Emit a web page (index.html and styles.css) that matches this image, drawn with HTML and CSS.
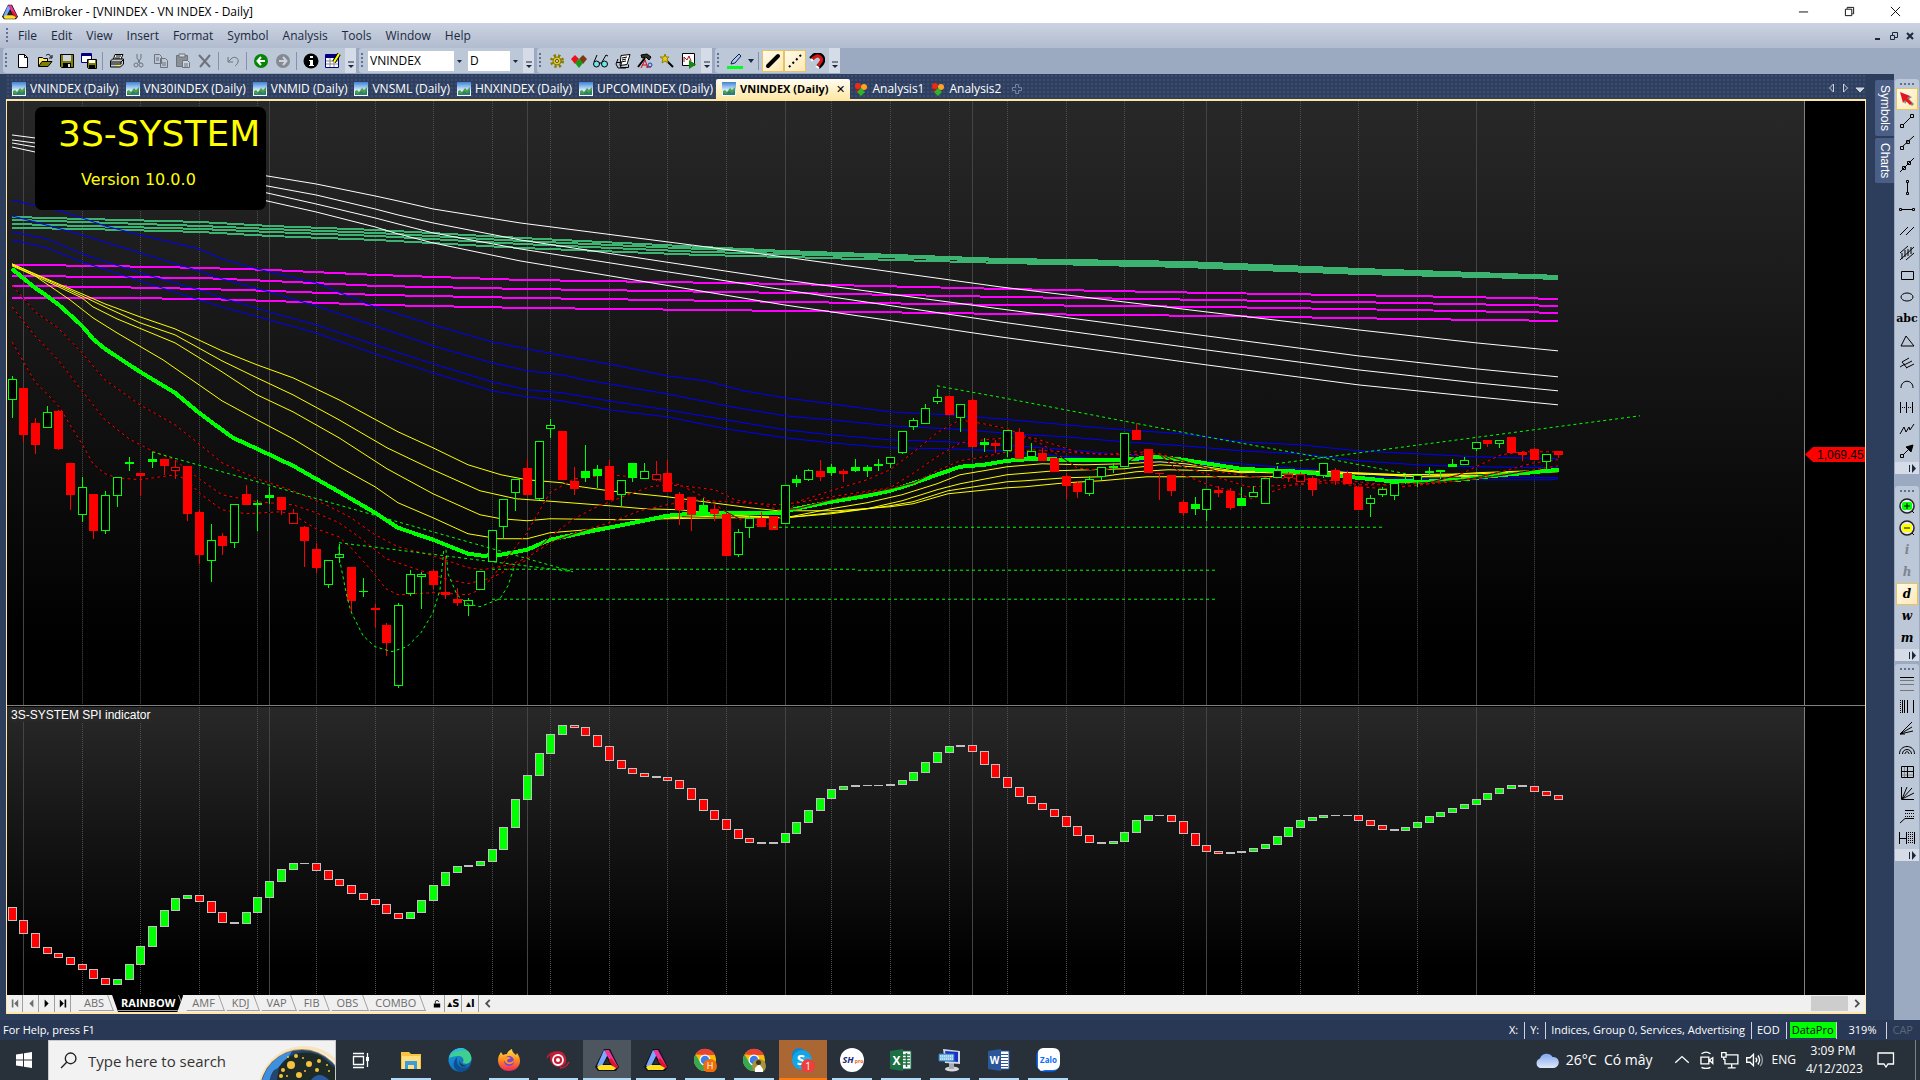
FILE: index.html
```html
<!DOCTYPE html>
<html lang="en">
<head>
<meta charset="utf-8">
<title>AmiBroker - [VNINDEX - VN INDEX - Daily]</title>
<link rel="stylesheet" href="styles.css">
</head>
<body>
<svg class="defs" aria-hidden="true">
  <defs>
    <linearGradient id="sky" x1="0" y1="0" x2="0" y2="1"><stop offset="0" stop-color="#3f83d8"/><stop offset=".6" stop-color="#d8eefc"/><stop offset="1" stop-color="#fff"/></linearGradient>
    <linearGradient id="ff" x1="0" y1="0" x2="0" y2="1"><stop offset="0" stop-color="#ffe14a"/><stop offset=".5" stop-color="#ff8a1e"/><stop offset="1" stop-color="#f0265e"/></linearGradient>
    <linearGradient id="edgeg" x1="0" y1="0" x2="1" y2="1"><stop offset="0" stop-color="#1b9de2"/><stop offset="1" stop-color="#0c59a4"/></linearGradient>
    <linearGradient id="cloudg" x1="0" y1="0" x2="0" y2="1"><stop offset="0" stop-color="#7fa8ee"/><stop offset="1" stop-color="#dfe9fb"/></linearGradient>
    <symbol id="ami" viewBox="0 0 24 24"><path d="M9 1h6l9 18-3 4H3l-3-4z" fill="#111"/><path d="M9 2l4 4-7 14-4-2z" fill="#7aa8ff"/><path d="M10 2h4l9 17-3 2-9-15z" fill="#f0359a"/><path d="M16 10l7 9-3 2-6-8z" fill="#e3122b"/><path d="M2 19l4-2h10l5 3-2 2H4z" fill="#ffe21f"/><path d="M12 10l3 6H9z" fill="#26303a"/></symbol>
    <symbol id="doc" viewBox="0 0 14 14"><rect width="14" height="14" fill="url(#sky)"/><path d="M1 13V9l2-1 2 2 3-4 2 2 3-3v8z" fill="#4fa047"/><path d="M1 13v-2l3 1 3-3 3 2 3-3v5z" fill="#2d7f73"/></symbol>
    <symbol id="gems" viewBox="0 0 14 14"><path d="M1 5l6 5-4 1z" fill="#b81414"/><circle cx="4" cy="4" r="3" fill="#f02818"/><circle cx="10" cy="5" r="3" fill="#ffa320"/><path d="M7 6l4 4-4 4-4-4z" fill="#2cb526"/></symbol>
    <symbol id="more" viewBox="0 0 8 8"><path d="M1 1h6" stroke="#1b293e"/><path d="M1 4h6L4 7z" fill="#1b293e"/></symbol>
    <symbol id="moreside" viewBox="0 0 10 9"><path d="M1.500 1v7" stroke="#1b293e" stroke-width="1"/><path d="M4 0v9l4-4.500z" fill="#1b293e"/></symbol>
    <symbol id="chrome" viewBox="0 0 24 24"><circle cx="12" cy="12" r="11" fill="#fbbc05"/><path d="M2.500 6.500A11 11 0 0 1 22 7H12z" fill="#ea4335"/><path d="M2.500 6.500A11 11 0 0 0 11 23l4-8-8-1z" fill="#34a853"/><circle cx="12" cy="12" r="5.500" fill="#fff"/><circle cx="12" cy="12" r="4.300" fill="#3b7ded"/></symbol>
  </defs>
</svg>

<header class="titlebar">
  <svg class="logo"><use href="#ami"/></svg>
  <h1>AmiBroker - [VNINDEX - VN INDEX - Daily]</h1>
  <div class="winctl">
    <button aria-label="Minimize"><svg viewBox="0 0 12 12"><path d="M1 6.500h10"/></svg></button>
    <button aria-label="Restore"><svg viewBox="0 0 12 12"><path d="M1.500 3.500h7v7h-7zM3.500 3V1.500h7v7H9"/></svg></button>
    <button aria-label="Close"><svg viewBox="0 0 12 12"><path d="M1 1l10 10M11 1L1 11"/></svg></button>
  </div>
</header>

<nav class="menubar">
  <i class="grip"></i>
  <a href="#">File</a><a href="#">Edit</a><a href="#">View</a><a href="#">Insert</a><a href="#">Format</a><a href="#">Symbol</a><a href="#">Analysis</a><a href="#">Tools</a><a href="#">Window</a><a href="#">Help</a>
  <div class="mdictl">
    <button aria-label="Minimize chart"><svg viewBox="0 0 8 8"><path d="M1 7h5" stroke-width="2"/></svg></button>
    <button aria-label="Restore chart"><svg viewBox="0 0 8 8"><path d="M.5 3.500h4v4h-4zM2.500 3V.5h5v5H5"/></svg></button>
    <button aria-label="Close chart"><svg viewBox="0 0 8 8"><path d="M1 1l6 6M7 1L1 7" stroke-width="2"/></svg></button>
  </div>
</nav>

<div class="toolbars">
  <div class="bar">
    <i class="grip"></i>
    <button aria-label="New"><svg viewBox="0 0 16 16"><path d="M3.500 1.500h6l3 3v10h-9z" fill="#fff" stroke="#000"/><path d="M9.500 1.500v3h3" fill="none" stroke="#000"/></svg></button>
    <button aria-label="Open"><svg viewBox="0 0 16 16"><path d="M1.500 13V4.500h4l1 1h4V8" fill="#ffe96a" stroke="#000"/><path d="M1.500 13.500L5 8.500h10l-4 5z" fill="#808000" stroke="#000"/><path d="M9 2.500c2-2 4-1 5 1.500M15 2v3h-3" fill="none" stroke="#000"/></svg></button>
    <button aria-label="Save"><svg viewBox="0 0 16 16"><path d="M1.500 1.500h13v13h-12l-1-1z" fill="#808000" stroke="#000"/><path d="M4 2h8v6H4z" fill="#ccd4e0"/><path d="M4 10h8v4H4z" fill="#000"/><path d="M9 11h2v3H9z" fill="#ddd"/></svg></button>
    <button aria-label="Save all"><svg viewBox="0 0 16 16"><path d="M.5.5h10v9H.5z" fill="#fff" stroke="#000080"/><path d="M1 1h9v2H1z" fill="#000080"/><path d="M6.500 6.500h9v9h-8l-1-1z" fill="#808000" stroke="#000"/><path d="M8 7h6v3H8z" fill="#fff"/><path d="M8 12h6v3H8z" fill="#000"/></svg></button>
    <i class="sep"></i>
    <button aria-label="Print"><svg viewBox="0 0 16 16"><path d="M4.500 6L6 1.500h8L12 6" fill="#fff" stroke="#000"/><path d="M7 3h5M6 5h5" stroke="#000"/><path d="M1.500 8l2-2h11v5l-3 3h-10z" fill="#c8c8c8" stroke="#000"/><path d="M2 9h10v2H2M12 9l3-3" stroke="#000" fill="none"/><path d="M8 12h3v1H8z" fill="#ff0"/></svg></button>
    <button aria-label="Cut"><svg viewBox="0 0 16 16" class="ln dim"><path d="M6 1v4l3 5M10 1v4L7 10"/><circle cx="5" cy="12" r="2"/><circle cx="10" cy="12" r="2"/></svg></button>
    <button aria-label="Copy"><svg viewBox="0 0 16 16" class="ln dim"><path d="M1.500 1.500h5l2 2v7h-7zM7.500 5.500h5l2 2v7h-7zM3 5h3M3 7h3M9 10h4M9 12h4"/></svg></button>
    <button aria-label="Paste"><svg viewBox="0 0 16 16"><path d="M1.500 2.500h11v11h-11z" fill="#8b8f96" stroke="#6d737c"/><path d="M4 1h6v3H4z" fill="#d5d9df" stroke="#6d737c"/><path d="M7.500 7.500h5l2 2v5h-7z" fill="#ccd4e0" stroke="#6d737c"/><path d="M9 11h4M9 13h4" stroke="#6d737c"/></svg></button>
    <button aria-label="Delete"><svg viewBox="0 0 16 16" class="ln dim"><path d="M2 2l11 12M13 2L3 14" stroke-width="2"/></svg></button>
    <i class="sep"></i>
    <button aria-label="Undo"><svg viewBox="0 0 16 16" class="ln dim"><path d="M3 4v5h5M3 9l4-4c4-2 7 1 6 4s-2 3-3 4"/></svg></button>
    <i class="sep"></i>
    <button aria-label="Back"><svg viewBox="0 0 16 16"><circle cx="8" cy="8" r="7" fill="#078507"/><path d="M12 8H5M8 4L4.500 8 8 12" fill="none" stroke="#fff" stroke-width="2"/></svg></button>
    <button aria-label="Forward"><svg viewBox="0 0 16 16"><circle cx="8" cy="8" r="7" fill="#858a91"/><path d="M4 8h7M8 4l3.500 4L8 12" fill="none" stroke="#ccd4e0" stroke-width="2"/></svg></button>
    <i class="sep"></i>
    <button aria-label="Information"><svg viewBox="0 0 16 16"><circle cx="8" cy="8" r="7.500" fill="#000"/><path d="M7 3h3v2H7zM6 7h4v5h1v1H6v-1h1V8H6z" fill="#fff"/></svg></button>
    <button aria-label="Edit data"><svg viewBox="0 0 16 16"><path d="M.5 1.500h13v13H.5z" fill="#fff" stroke="#000080"/><path d="M1 2h12v3H1z" fill="#000080"/><path d="M1 8h12M1 11h12M5 5v9M9 5v9" stroke="#888"/><path d="M14 1L9 9" stroke="#000" stroke-width="4"/><path d="M14 1L9 9" stroke="#ff0" stroke-width="2"/></svg></button>
    <button class="over" aria-label="Toolbar options"><svg><use href="#more"/></svg></button>
  </div>
  <div class="bar">
    <i class="grip"></i>
    <select class="symbol" aria-label="Symbol"><option>VNINDEX</option></select>
    <select class="interval" aria-label="Interval"><option>D</option></select>
    <button class="over" aria-label="Toolbar options"><svg><use href="#more"/></svg></button>
  </div>
  <div class="bar">
    <i class="grip"></i>
    <button aria-label="Preferences"><svg viewBox="0 0 16 16"><circle cx="8" cy="8" r="5" fill="none" stroke="#8a7a00" stroke-width="4" stroke-dasharray="2 2"/><circle cx="8" cy="8" r="4" fill="#d9c92b" stroke="#8a7a00"/><circle cx="8" cy="8" r="1.500" fill="#fff" stroke="#554900"/></svg></button>
    <button aria-label="Analysis"><svg viewBox="0 0 16 16"><path d="M4 2l4 4-4 5-4-5z" fill="#f0101c"/><path d="M12 2l4 4-4 5-4-5z" fill="#7a3b12"/><path d="M8 6l4 4-4 5-4-5z" fill="#149a14"/></svg></button>
    <button aria-label="Explore"><svg viewBox="0 0 16 16" class="ln"><circle cx="3.500" cy="11" r="3" fill="#6fe3e6"/><circle cx="11.500" cy="11" r="3" fill="#6fe3e6"/><path d="M1 9l3-7M9 9l4-7 2 1M6 10h3"/></svg></button>
    <button aria-label="Report"><svg viewBox="0 0 16 16"><path d="M6 2.500l9-1-3 10-7 1z" fill="#fff" stroke="#000"/><path d="M1.500 9.500h5l-1 5h8v-3M3 6l-2 5 2 4h8M7 5l5-1M7 7l4-1M6 9l5-1" fill="none" stroke="#000"/></svg></button>
    <button aria-label="Formula editor"><svg viewBox="0 0 16 16"><path d="M4 2l6-1 4 3-2 3-3-3-4 1z" fill="#30331a" stroke="#000"/><path d="M8 5L1 14" stroke="#000" stroke-width="2"/><path d="M4 15l4-8 3 8M5 12h5M9 14h5" stroke="#c81010" fill="none"/><circle cx="13" cy="12" r="2" fill="none" stroke="#1b3fb8"/></svg></button>
    <button aria-label="Code wizard"><svg viewBox="0 0 16 16"><path d="M5 5l9 9" stroke="#000" stroke-width="2"/><path d="M6 1l1 3h3L8 6l1 4-3-2-3 2 1-4-3-2h4z" fill="#e9cd16" stroke="#92800c"/></svg></button>
    <button aria-label="Run"><svg viewBox="0 0 16 16"><path d="M1.500.5h12v12h-12z" fill="#fff" stroke="#000"/><path d="M3 9V4l3 3 2-4 2 5" fill="none" stroke="#b01818"/><path d="M8 7l7 4.500L8 16z" fill="#128a12"/></svg></button>
    <button class="over" aria-label="Toolbar options"><svg><use href="#more"/></svg></button>
  </div>
  <div class="bar">
    <i class="grip"></i>
    <button aria-label="Line color"><svg viewBox="0 0 16 16"><path d="M0 13h16v3H0z" fill="#00ff21"/><path d="M12 1l2 2-6 7-4 1 1-3z" fill="#a9c4ff" stroke="#123"/></svg></button>
    <button class="drop" aria-label="Pick color"><svg viewBox="0 0 8 8"><path d="M1 2h6L4 6z" fill="#1b293e"/></svg></button>
    <i class="sep"></i>
    <button class="on" aria-label="Thick line"><svg viewBox="0 0 16 16"><path d="M3 13L13 3" stroke="#000" stroke-width="4" stroke-linecap="round"/></svg></button>
    <button class="on" aria-label="Dotted line"><svg viewBox="0 0 16 16"><path d="M2 14L14 2" stroke="#000" stroke-width="2" stroke-dasharray="2 3"/></svg></button>
    <button aria-label="Snap"><svg viewBox="0 0 16 16"><path d="M2 6l3-3c5-4 12 2 7 8l-3 3" fill="none" stroke="#000" stroke-width="5"/><path d="M3 6l3-2c4-3 9 2 5 6l-2 3" fill="none" stroke="#d51414" stroke-width="3"/><path d="M2 6l2 2M7 13l3 2" stroke="#fff" stroke-width="2"/></svg></button>
    <button class="over" aria-label="Toolbar options"><svg><use href="#more"/></svg></button>
  </div>
</div>

<main class="main">
  <section class="work">
    <nav class="doctabs">
      <a href="#"><svg><use href="#doc"/></svg>VNINDEX (Daily)</a>
      <a href="#"><svg><use href="#doc"/></svg>VN30INDEX (Daily)</a>
      <a href="#"><svg><use href="#doc"/></svg>VNMID (Daily)</a>
      <a href="#"><svg><use href="#doc"/></svg>VNSML (Daily)</a>
      <a href="#"><svg><use href="#doc"/></svg>HNXINDEX (Daily)</a>
      <a href="#"><svg><use href="#doc"/></svg>UPCOMINDEX (Daily)</a>
      <a href="#" class="active"><svg><use href="#doc"/></svg>VNINDEX (Daily)<span class="x">✕</span></a>
      <a href="#"><svg><use href="#gems"/></svg>Analysis1</a>
      <a href="#"><svg><use href="#gems"/></svg>Analysis2</a>
      <button class="add" aria-label="New tab"><svg viewBox="0 0 12 12"><path d="M4.500 1.500h3v3h3v3h-3v3h-3v-3h-3v-3h3z"/></svg></button>
      <div class="tabnav">
        <button aria-label="Scroll left"><svg viewBox="0 0 8 10"><path d="M5.500 1v8l-4-4z"/></svg></button>
        <button aria-label="Scroll right"><svg viewBox="0 0 8 10"><path d="M1.500 1v8l4-4z"/></svg></button>
        <button aria-label="Tab list"><svg viewBox="0 0 8 10"><path d="M0 5h8L4 9z" class="solid"/></svg></button>
      </div>
    </nav>
    <div class="frame">
      <div class="charts">
        <div class="price">
          <svg class="plot" id="price" viewBox="7 101 1797 604" preserveAspectRatio="none"></svg>
          <div class="badge"><p class="name">3S-SYSTEM</p><p class="ver">Version 10.0.0</p></div>
          <div class="axis"><span class="last">1,069.45</span></div>
        </div>
        <div class="spi">
          <svg class="plot" id="spi" viewBox="7 707 1797 288" preserveAspectRatio="none"></svg>
          <p class="label">3S-SYSTEM SPI indicator</p>
          <div class="axis"></div>
        </div>
      </div>
      <div class="sheets">
        <button aria-label="First sheet"><svg viewBox="0 0 10 10" class="off"><path d="M1 0h2v10H1zM9 0v10L4 5z"/></svg></button>
        <button aria-label="Previous sheet"><svg viewBox="0 0 10 10" class="off"><path d="M8 0v10L3 5z"/></svg></button>
        <button aria-label="Next sheet"><svg viewBox="0 0 10 10"><path d="M2 0v10l5-5z"/></svg></button>
        <button aria-label="Last sheet"><svg viewBox="0 0 10 10"><path d="M1 0v10l5-5zM7 0h2v10H7z"/></svg></button>
        <div class="tabs"><a href="#">ABS</a><a href="#" class="cur">RAINBOW</a><a href="#">AMF</a><a href="#">KDJ</a><a href="#">VAP</a><a href="#">FIB</a><a href="#">OBS</a><a href="#">COMBO</a></div>
        <button aria-label="Lock"><svg viewBox="0 0 10 10"><path d="M1 5h8v5H1z"/><path d="M3 5V2q2-2 4 0v1" fill="none" stroke="#000"/></svg></button>
        <button class="mini">▴S</button>
        <button class="mini">▴I</button>
        <div class="scroll"><button aria-label="Scroll left"><svg viewBox="0 0 8 10"><path d="M6 1L2 5l4 4"/></svg></button><i class="thumb"></i><button aria-label="Scroll right"><svg viewBox="0 0 8 10"><path d="M2 1l4 4-4 4"/></svg></button></div>
      </div>
    </div>
  </section>
  <aside class="dock"><button>Symbols</button><button>Charts</button></aside>
  <aside class="side">
    <div class="group">
      <i class="hgrip"></i>
      <button class="on" aria-label="Select"><svg viewBox="0 0 16 16"><path d="M2 2l11 4-3 2 5 5-2 2-5-5-2 3z" fill="#8a8480"/><path d="M1 1l10 4-3 2 5 5-2 2-5-5-2 3z" fill="#e8141c"/></svg></button>
      <button aria-label="Trend line"><svg viewBox="0 0 16 16" class="ln"><path d="M4 12l8-8M1.500 11.500h3v3h-3zM11.500 1.500h3v3h-3z"/></svg></button>
      <button aria-label="Ray"><svg viewBox="0 0 16 16" class="ln"><path d="M3 12L15 1M1.500 11.500h3v3h-3zM7.500 5.500h3v3h-3z"/></svg></button>
      <button aria-label="Extended line"><svg viewBox="0 0 16 16" class="ln"><path d="M1 15L15 1M3.500 9.500h3v3h-3zM8.500 4.500h3v3h-3z"/></svg></button>
      <button aria-label="Vertical line"><svg viewBox="0 0 16 16" class="ln"><path d="M8.500 4v9M7.500 1.500h2v2h-2zM7.500 13.500h2v2h-2z"/></svg></button>
      <button aria-label="Horizontal line"><svg viewBox="0 0 16 16" class="ln"><path d="M3 8.500h10M.5 7.500h2v2h-2zM13.500 7.500h2v2h-2z"/></svg></button>
      <button aria-label="Parallel lines"><svg viewBox="0 0 16 16" class="ln"><path d="M1 12l8-8M7 12l8-8"/></svg></button>
      <button aria-label="Regression channel"><svg viewBox="0 0 16 16" class="ln"><path d="M1 8l8-7M1 15L15 2M7 15l8-7M3 8v6M6 5v7M9 4v7M12 2v7"/></svg></button>
      <button aria-label="Rectangle"><svg viewBox="0 0 16 16" class="ln"><path d="M2.500 4.500h12v8h-12z"/></svg></button>
      <button aria-label="Ellipse"><svg viewBox="0 0 16 16" class="ln"><ellipse cx="8" cy="8" rx="6" ry="4"/></svg></button>
      <button class="abc">abc</button>
      <button aria-label="Triangle"><svg viewBox="0 0 16 16" class="ln"><path d="M7 3l8 10H2z"/></svg></button>
      <button aria-label="Pitchfork"><svg viewBox="0 0 16 16" class="ln"><path d="M3 7l7-4M5 10l8-4M7 13l8-4M3 7l5 6M1 12l5-3"/></svg></button>
      <button aria-label="Arc"><svg viewBox="0 0 16 16" class="ln"><path d="M2 11c0-9 12-9 12 0"/></svg></button>
      <button aria-label="Cycles"><svg viewBox="0 0 16 16" class="ln"><path d="M1.500 3v11M7.500 3v11M13.500 3v11"/><path d="M3 8.500h10" stroke-dasharray="1 1"/></svg></button>
      <button aria-label="Zig zag"><svg viewBox="0 0 16 16" class="ln"><path d="M1 13l4-7 2 5 3-5 1 3 4-6"/></svg></button>
      <button aria-label="Arrow"><svg viewBox="0 0 16 16" class="ln"><path d="M4 12l6-6M1.500 11.500h3v3h-3z"/><path d="M7 4l7-2-2 7z" fill="#000"/></svg></button>
      <button class="over" aria-label="Options"><svg><use href="#moreside"/></svg></button>
    </div>
    <div class="group">
      <i class="hgrip"></i>
      <button aria-label="Zoom in"><svg viewBox="0 0 16 16"><circle cx="8" cy="8" r="7" fill="#e8ecf2" stroke="#222" stroke-width="1.500"/><rect x="3" y="4" width="10" height="8" rx="2" fill="#0f0"/><path d="M5 8h6M8 5v6M13 13l2 2" stroke="#000"/></svg></button>
      <button aria-label="Zoom out"><svg viewBox="0 0 16 16"><circle cx="8" cy="8" r="7" fill="#e8ecf2" stroke="#222" stroke-width="1.500"/><rect x="3" y="4" width="10" height="8" rx="2" fill="#ff0"/><path d="M5 8h6M13 13l2 2" stroke="#000"/></svg></button>
      <button class="per dimtext">i</button>
      <button class="per dimtext">h</button>
      <button class="per on">d</button>
      <button class="per">w</button>
      <button class="per">m</button>
      <button class="over" aria-label="Options"><svg><use href="#moreside"/></svg></button>
    </div>
    <div class="group tight">
      <i class="hgrip"></i>
      <button aria-label="Retracement"><svg viewBox="0 0 16 16" class="ln"><path d="M1 1.500h14"/><path d="M1 4.500h14M1 8.500h14M1 14.500h14" stroke="#777"/></svg></button>
      <button aria-label="Time zones"><svg viewBox="0 0 16 16" class="ln"><path d="M1.500 2v13" stroke-dasharray="1 1"/><path d="M3.500 2v13M5.500 2v13M8.500 2v13M14.500 2v13"/></svg></button>
      <button aria-label="Fan"><svg viewBox="0 0 16 16" class="ln"><path d="M1 14L13 2M1 14l12-7M1 14l13-3M1 14h5"/></svg></button>
      <button aria-label="Arcs"><svg viewBox="0 0 16 16" class="ln"><path d="M.5 12c0-10 15-10 15 0M3.500 12c0-6 9-6 9 0M6 12c0-3 4-3 4 0"/></svg></button>
      <button aria-label="Gann square"><svg viewBox="0 0 16 16" class="ln"><path d="M5.500 2v12M2 11h12" stroke="#888"/><path d="M2.500 2.500h12v11h-12zM8.500 2v12M2 7.500h12"/></svg></button>
      <button aria-label="Gann fan"><svg viewBox="0 0 16 16" class="ln"><path d="M2.500 1v12.500H15M3 13L8 1M3 13L13 2M3 13l12-6"/></svg></button>
      <button aria-label="Extension"><svg viewBox="0 0 16 16" class="ln"><path d="M1 15l5-4.500h9M6 2.500h9"/><path d="M6 5.500h9M6 8.500h9" stroke-dasharray="1 1"/></svg></button>
      <button aria-label="Time extension"><svg viewBox="0 0 16 16" class="ln"><path d="M.5 2v12M1 8.500h6M7.500 2v12M15.500 2v12"/><path d="M9.500 2v12M11.500 2v12M13.500 2v12" stroke-dasharray="1 1"/></svg></button>
      <button class="over" aria-label="Options"><svg><use href="#moreside"/></svg></button>
    </div>
  </aside>
</main>

<footer class="status">
  <span class="help">For Help, press F1</span>
  <span>X:</span><span>Y:</span><span>Indices, Group 0, Services, Advertising</span><span>EOD</span><span class="feed"><b>DataPro</b></span><span class="wide">319%</span><span class="cap">CAP</span>
</footer>

<div class="taskbar">
  <button class="start" aria-label="Start"><svg viewBox="0 0 16 16"><path d="M0 2.500l7-1v6H0zM8 1.300L16 0v7.500H8zM0 8.500h7v6l-7-1zM8 8.500h8V16l-8-1.200z" fill="#fff"/></svg></button>
  <label class="search">
    <svg class="lens" viewBox="0 0 16 16"><circle cx="10" cy="6" r="5"/><path d="M6.500 9.500L1 15"/></svg>
    <input type="text" placeholder="Type here to search" aria-label="Search">
    <svg class="globe" viewBox="0 0 76 38"><circle cx="45" cy="50" r="46" fill="#ffd27a" opacity=".45"/><circle cx="45" cy="50" r="43" fill="#f2f2f2"/><circle cx="43" cy="49" r="42" fill="#b08a50"/><circle cx="43" cy="50" r="42" fill="#24466e"/><path d="M1 49c2-22 16-36 32-40-4 8-12 17-18 19-4 5-4 10-5 12z" fill="#3f8fe0"/><path d="M20 25C28 12 45 6 62 14l14 12v12H18z" fill="#1d2a26"/><path d="M52 38q8-10 18 0z" fill="#285a9e"/><g fill="#f5c23d"><circle cx="32" cy="23" r="4"/><circle cx="40" cy="33" r="3"/><circle cx="50" cy="22" r="3"/><circle cx="60" cy="19" r="2"/><circle cx="24" cy="28" r="2"/><circle cx="22" cy="34" r="2"/><circle cx="37" cy="14" r="2"/><circle cx="58" cy="28" r="2"/><circle cx="68" cy="23" r="1"/><circle cx="29" cy="15" r="1"/><circle cx="46" cy="29" r="1"/><circle cx="44" cy="16" r="1"/><circle cx="28" cy="34" r="1"/><circle cx="70" cy="29" r="1"/></g></svg>
  </label>
  <button class="view" aria-label="Task view"><svg viewBox="0 0 24 24"><path d="M5.500 8.500h10v8h-10zM5 5.500h11M5 19.500h11M19.500 5v14" fill="none" stroke="#fff" stroke-width="1.300"/><path d="M18 9h3v4h-3z" fill="#fff"/></svg></button>
  <button class="run" aria-label="File Explorer"><svg viewBox="0 0 24 24"><path d="M2 4h8l2 2h10v15H2z" fill="#f6c344"/><path d="M3 8h18v13H3z" fill="#ffdf7c"/><path d="M6 21v-8h12v8h-3v-4H9v4z" fill="#3d9be0"/></svg></button>
  <button aria-label="Edge"><svg viewBox="0 0 24 24"><circle cx="12" cy="12" r="11.500" fill="url(#edgeg)"/><path d="M1 10C3-2 22-3 23.500 10c0 5-5 7-9 5 2-2 1-7-4-7C6 8 3 9 1 10z" fill="#3fcf8f"/><path d="M1 10C3 0 16-3 19 3 14 2 4 3 1 10z" fill="#30b9d8"/><path d="M9 13c0 6 7 9 13 5-3 6-9 6-12 5-5-3-6-8-1-14z" fill="#0b4f94"/><path d="M12 12c-1 3 2 5 6 6-4 2-8-2-6-6z" fill="#28313a"/></svg></button>
  <button class="run" aria-label="Firefox"><svg viewBox="0 0 24 24"><path d="M12 23C5 23 1 18 1 12c0-4 2-6 3-8l2 3c2-1 3-1 4-1 1-3 3-4 5-5 0 3 2 4 4 6l1-2c2 3 3 5 3 8 0 6-5 10-11 10z" fill="url(#ff)"/><circle cx="12" cy="13" r="5" fill="#7a43d6"/><path d="M6 9c3-1 6 0 8 1-1 1-4 1-4 3s5 2 7-1c0 5-9 7-11-3z" fill="#ff9a1f"/></svg></button>
  <button class="run" aria-label="Viewer"><svg viewBox="0 0 24 24"><path d="M4 8c3-6 14-7 16 2 1 4-1 6-1 6-6 7-16 1-15-8z" fill="#c41e35"/><path d="M1 10c2-4 5-6 9-6M23 14c-2 4-5 6-9 6" stroke="#c41e35" stroke-width="1.500" fill="none"/><circle cx="12" cy="12" r="5" fill="none" stroke="#fff" stroke-width="1.800"/><circle cx="12" cy="12" r="2" fill="#fff"/></svg></button>
  <button class="run here" aria-label="AmiBroker"><svg><use href="#ami"/></svg></button>
  <button class="run" aria-label="AmiBroker 2"><svg><use href="#ami"/></svg></button>
  <button class="run" aria-label="Chrome"><svg viewBox="0 0 24 24"><use href="#chrome"/><circle cx="17" cy="18" r="7" fill="#ee6c0a"/><text x="17" y="21" text-anchor="middle" fill="#fff" font-size="9">H</text></svg></button>
  <button class="run" aria-label="Chrome profile"><svg viewBox="0 0 24 24"><use href="#chrome"/><circle cx="17" cy="18" r="7" fill="#a5933e"/><path d="M13 25v-5l3-3h2l3 4v4z" fill="#fff"/><circle cx="16.500" cy="14.500" r="2.500" fill="#4a3020"/></svg></button>
  <button class="run alert" aria-label="Skype"><svg viewBox="0 0 24 24"><circle cx="8" cy="7" r="7" fill="#0a87cf"/><circle cx="11" cy="12" r="10" fill="#12a5e8"/><circle cx="14" cy="15" r="7" fill="#1fb2ef"/><text x="10" y="17" text-anchor="middle" fill="#fff" font-size="15" font-weight="700">S</text><circle cx="17" cy="18" r="7" fill="#ee3f3d"/><text x="17" y="21.500" text-anchor="middle" fill="#fff" font-size="10">1</text></svg></button>
  <button class="run" aria-label="SHPro"><svg viewBox="0 0 24 24"><circle cx="12" cy="12" r="12" fill="#fff"/><text x="8" y="15" text-anchor="middle" fill="#1b2a7a" font-size="9" font-weight="700" font-style="italic">SH</text><text x="19" y="15" text-anchor="middle" fill="#f0641e" font-size="5" font-weight="700">pro</text></svg></button>
  <button class="run" aria-label="Excel"><svg viewBox="0 0 24 24"><path d="M12 3h10v18H12z" fill="#fff" stroke="#1d7044"/><path d="M14 7h7M14 10h7M14 13h7M14 16h7M17.500 5v14" stroke="#1d7044" stroke-width="1.500"/><path d="M1 3l13-2v22L1 21z" fill="#1d7044"/><text x="7.500" y="16.500" text-anchor="middle" fill="#fff" font-size="12" font-weight="700">X</text></svg></button>
  <button class="run" aria-label="Remote keyboard"><svg viewBox="0 0 24 24"><ellipse cx="14" cy="21" rx="7" ry="2.500" fill="#d8d8dc"/><path d="M11 15h5v6h-5z" fill="#a8abb4"/><path d="M5 1l17 2v13L7 15z" fill="#d5d9e4"/><path d="M7 3l13 1v10L9 13z" fill="#1732c8"/><path d="M1 6h15v7H1z" fill="#8cc6ef" stroke="#2b74b8"/><path d="M2 8h13M2 11h13" stroke="#fff" stroke-dasharray="1 1"/></svg></button>
  <button class="run" aria-label="Word"><svg viewBox="0 0 24 24"><path d="M12 3h10v18H12z" fill="#fff" stroke="#2b579a"/><path d="M14 6.500h7M14 9.500h7M14 12.500h7M14 15.500h7M14 18.500h7" stroke="#2b579a"/><path d="M1 3l13-2v22L1 21z" fill="#2b579a"/><text x="7.500" y="16" text-anchor="middle" fill="#fff" font-size="10" font-weight="700">W</text></svg></button>
  <button class="run" aria-label="Zalo"><svg viewBox="0 0 24 24"><rect x=".5" y=".5" width="23" height="23" rx="7" fill="#0a6cff"/><path d="M7 0h10q7 0 7 7v8q0 7-7 7H9l-4 1-3-3V7q-1-6 5-7z" fill="#fff"/><text x="12.500" y="14.500" text-anchor="middle" fill="#0a6cff" font-size="8" font-weight="700">Zalo</text></svg></button>
  <div class="tray">
    <svg class="cloud" viewBox="0 0 24 16"><path d="M5 16a5 5 0 0 1 0-9.500A7 7 0 0 1 17.500 5 5.500 5.500 0 0 1 19 16z" fill="url(#cloudg)"/></svg>
    <span class="weather">26°C&nbsp; Có mây</span>
    <svg class="ti" viewBox="0 0 16 16"><path d="M2 10.500L8 5l6 5.500"/></svg>
    <svg class="ti" viewBox="0 0 16 16"><path d="M3.500 5.500h7v6h-7zM11 8l3-2v5zM4 2.500Q8-.5 12 2.500M4 14.500q4 2 8 0"/></svg>
    <svg class="ti" viewBox="0 0 16 16"><path d="M5 3.500h10v8H3.500V7M9.500 12v3M6 15h7M.5 1.500h4v4h-4zM2.500 5v3"/></svg>
    <svg class="ti" viewBox="0 0 16 16"><path d="M1.500 6h3l3-3v10l-3-3h-3zM9.500 6q2 2 0 4M11.500 4q3 4 0 8"/><path d="M13.500 2.500q4 5.500 0 11" opacity=".5"/></svg>
    <span class="lang">ENG</span>
    <time>3:09 PM<br>4/12/2023</time>
    <svg class="note" viewBox="0 0 18 16"><path d="M1 1h15.500v11H11l-2 3-2-3H1z"/></svg>
    <i class="peek"></i>
  </div>
</div>
<script src="chart.js"></script>
</body>
</html>
```
FILE: styles.css
```css
* { box-sizing: border-box; }
body { margin: 0; height: 100vh; display: flex; flex-direction: column; overflow: hidden; font: 12px/16px "Open Sans", "Noto Sans", sans-serif; color: #000; background: #2d3d5c; }
button { border: 0; padding: 0; margin: 0; background: none; font: inherit; color: inherit; display: flex; align-items: center; justify-content: center; }
a { color: inherit; text-decoration: none; }
p, h1 { margin: 0; font: inherit; }
svg { display: block; flex: none; }
.defs { position: absolute; width: 0; height: 0; }
.ln { fill: none; stroke: #000; }
.dim { stroke: #6d737c; }

.titlebar { height: 23px; display: flex; align-items: center; background: #fff; padding: 0 2px; gap: 5px; flex: none; }
.logo { width: 16px; height: 16px; }
.winctl { margin-left: auto; display: flex; }
.winctl button { width: 46px; height: 23px; }
.winctl svg { width: 11px; height: 11px; fill: none; stroke: #000; }

.menubar { height: 25px; flex: none; display: flex; align-items: center; background: linear-gradient(#cbd3e1, #b1bccf); color: #1b293e; padding-left: 4px; }
.menubar a { padding: 0 7px; }
.mdictl { margin-left: auto; display: flex; gap: 8px; padding-right: 6px; }
.mdictl svg { width: 8px; height: 8px; fill: none; stroke: #1b293e; }
.grip { width: 3px; height: 16px; margin: 0 4px 0 2px; background: repeating-linear-gradient(#5f7093 0 2px, transparent 2px 4px); background-size: 2px 100%; background-repeat: no-repeat; flex: none; }
.menubar .grip { margin-right: 2px; }

.toolbars { height: 26px; flex: none; display: flex; background: #9ba9c1; padding-left: 3px; gap: 3px; }
.bar { height: 25px; display: flex; align-items: center; background: #bcc7d8; border-radius: 3px; }
.bar button { width: 22px; height: 22px; }
.bar button svg { width: 16px; height: 16px; }
.bar .over { width: 11px; height: 25px; margin-left: 1px; align-items: flex-end; padding-bottom: 4px; background: #d5dce8; }
.bar .over svg { width: 8px; height: 8px; }
.bar .drop { width: 10px; }
.bar .drop svg { width: 8px; height: 8px; }
.sep { width: 1px; height: 18px; background: #8591a8; margin: 0 3px 0 2px; }
.on { background: linear-gradient(135deg, #fffbee, #fde8b4); border: 1px solid #e5c365; }
select { appearance: none; height: 20px; border: 0; padding: 0 0 0 2px; margin-right: 3px; font: inherit; border-radius: 0; background: url("data:image/svg+xml,%3Csvg xmlns='http://www.w3.org/2000/svg' width='11' height='20'%3E%3Crect width='11' height='20' fill='%23bcc7d8'/%3E%3Cpath d='M3 9h5l-2.500 3z' fill='%231b293e'/%3E%3C/svg%3E") right / 11px 20px no-repeat #fff; }
.symbol { width: 97px; }
.interval { width: 53px; margin-right: 1px; }

.main { flex: 1; min-height: 0; display: flex; }
.work { flex: 1; min-width: 0; display: flex; flex-direction: column; padding: 0 9px 6px 6px; }
.doctabs { height: 25px; flex: none; display: flex; align-items: flex-end; color: #fff; padding-left: 2px; background: radial-gradient(#3b4d70 1px, transparent 1px) 0 0 / 4px 4px #2f3f5f; }
.doctabs a { height: 20px; display: flex; align-items: center; gap: 4px; padding: 0 3px 0 4px; white-space: nowrap; }
.doctabs svg { width: 14px; height: 14px; }
.doctabs .active { padding: 0 5px 0 6px; background: linear-gradient(#fffcf2, #ffe8a6); color: #000; font-size: 11px; font-weight: 700; border-radius: 2px 2px 0 0; }
.doctabs .x { font-weight: 400; margin-left: 4px; }
.add { height: 20px; width: 26px; }
.add svg { width: 12px; height: 12px; fill: none; stroke: #7384a6; }
.tabnav { margin-left: auto; display: flex; gap: 6px; padding: 0 2px 6px 0; }
.tabnav svg { width: 8px; height: 10px; fill: none; stroke: #ced4dd; }
.tabnav .solid { fill: #ced4dd; }

.frame { flex: 1; min-height: 0; display: flex; flex-direction: column; border: 1px solid #ffe8a6; border-width: 2px 1px 2px 1px; background: #f0f0f0; }
.charts { flex: 1; min-height: 0; display: flex; flex-direction: column; background: #000; }
.price, .spi { position: relative; display: flex; min-height: 0; }
.price { flex: 605; border-bottom: 1px solid #808080; }
.spi { flex: 289; padding-top: 1px; }
.plot { flex: 1; min-width: 0; width: 100%; height: 100%; background: linear-gradient(#282828, #000 90%); shape-rendering: crispEdges; }
.axis { position: relative; width: 61px; flex: none; background: #000; border-left: 1px solid #808080; }
.last { position: absolute; top: 346px; left: 0; right: 0; height: 15px; padding-left: 12px; background: #f00; clip-path: polygon(8px 0, 100% 0, 100% 100%, 8px 100%, 0 50%); font: 12px/16px "Liberation Sans", Arial, sans-serif; }
.badge { position: absolute; left: 28px; top: 6px; width: 231px; height: 103px; border-radius: 7px; background: #000; color: #ff0; font-family: "DejaVu Sans", Verdana, sans-serif; }
.name { font-size: 36px; line-height: 46px; padding: 4px 0 0 23px; white-space: nowrap; }
.ver { font-size: 16px; line-height: 20px; padding: 13px 0 0 46px; }
.label { position: absolute; left: 4px; top: 2px; font: 12px/14px "Liberation Sans", Arial, sans-serif; color: #fff; background: #282828; }

.sheets { height: 17px; flex: none; display: flex; background: #f0f0f0; color: #6d6d6d; }
.sheets button { width: 16px; border-right: 1px solid #a0a0a0; color: #000; }
.sheets button svg { width: 8px; height: 9px; }
.sheets .off { fill: #6d6d6d; }
.sheets .mini { width: 17px; font: 700 10px/14px "DejaVu Sans", sans-serif; }
.tabs { display: flex; margin: 0 5px 0 4px; font-size: 11px; line-height: 15px; }
.tabs a { position: relative; padding: 0 8px 0 9px; }
.tabs a::before { content: ""; position: absolute; inset: 0 1px 1px 1px; border: solid #a0a0a0; border-width: 0 1px 1px 0; transform: skewX(20deg); }
.tabs .cur { background: #000; color: #fff; font-weight: 700; clip-path: polygon(0 0, 100% 0, calc(100% - 6px) 100%, 6px 100%); }
.scroll { flex: 1; display: flex; align-items: center; }
.scroll .thumb { margin-left: auto; width: 37px; height: 15px; background: #cdcdcd; }
.scroll button { width: 17px; border: 0; }
.scroll svg { fill: none; stroke: #505050; stroke-width: 2; }

.dock { width: 19px; flex: none; padding: 6px 0; display: flex; flex-direction: column; gap: 2px; }
.dock button { width: 19px; padding: 5px 0; justify-content: flex-start; writing-mode: vertical-rl; background: #4b5e85; color: #fff; border-radius: 2px 0 0 2px; font: 12px/19px "Liberation Sans", Arial, sans-serif; }

.side { width: 26px; flex: none; background: #9ba9c1; padding: 5px 1px 0; display: flex; flex-direction: column; gap: 12px; }
.group { background: #bcc7d8; border-radius: 3px; display: flex; flex-direction: column; align-items: center; }
.group.tight { margin-top: -9px; }
.hgrip { width: 14px; height: 2px; margin: 4px 0 3px; background: repeating-linear-gradient(90deg, #5f7093 0 2px, transparent 2px 4px); }
.group button { width: 22px; height: 22px; }
.group button svg { width: 16px; height: 16px; }
.group .over { width: 100%; height: 12px; background: #d5dce8; padding-left: 12px; }
.group .over svg { width: 10px; height: 9px; }
.abc { font: 700 11px/12px "DejaVu Serif", serif; }
.per { font: italic 700 12px/14px "DejaVu Serif", serif; }
.dimtext { color: #7f858e; }

.status { height: 20px; flex: none; display: flex; align-items: center; background: #293955; color: #fff; font-size: 11px; padding: 0 1px 0 3px; }
.status span { height: 17px; padding: 0 6px 0 5px; border-right: 1px solid #ced4dd; white-space: nowrap; }
.status .help { margin-right: auto; border: 0; padding: 0; }
.status .feed { padding: 0 0 0 3px; }
.status .feed b { display: block; background: #0f0; color: #000; font-weight: 400; padding: 0 2px; }
.status .wide { padding: 0 10px 0 12px; }
.status .cap { border: 0; color: #5b6677; }

.taskbar { height: 40px; flex: none; display: flex; align-items: stretch; background: #28313a; color: #fff; }
.taskbar > button { width: 48px; margin-right: 1px; }
.taskbar > button svg { width: 24px; height: 24px; }
.taskbar .start { margin: 0; }
.taskbar .start svg { width: 16px; height: 16px; }
.taskbar .view { margin-right: 3px; }
.search { width: 288px; display: flex; align-items: center; background: #f2f2f2; border: 1px solid #c9c9c9; border-bottom: 0; padding-left: 11px; color: #333; }
.lens { width: 17px; height: 17px; fill: none; stroke: #222; stroke-width: 1.3; }
.search input { flex: 1; min-width: 0; border: 0; background: none; padding: 0 0 0 11px; font: 15px/20px "Open Sans", sans-serif; }
.search input::placeholder { color: #333; opacity: 1; }
.globe { width: 76px; height: 38px; align-self: flex-end; }
.run { background: linear-gradient(#b0dcf7, #b0dcf7) center bottom / 40px 2px no-repeat; }
.taskbar .here { background: linear-gradient(#b0dcf7, #b0dcf7) center bottom / 48px 2px no-repeat #4d565f; }
.taskbar .alert { background: linear-gradient(#ff7a0a, #ff7a0a) center bottom / 48px 2px no-repeat #aa6633; }
.tray { margin-left: auto; display: flex; align-items: center; font-size: 14px; }
.cloud { width: 24px; height: 16px; margin-right: 7px; }
.weather { margin-right: 20px; white-space: nowrap; }
.ti { width: 18px; height: 18px; margin-right: 6px; fill: none; stroke: #fff; stroke-width: 1.2; }
.lang { font-size: 12px; margin: 0 10px 0 3px; }
.tray time { font-size: 12px; line-height: 18px; text-align: center; width: 54px; }
.note { width: 18px; height: 16px; margin: 0 20px 0 17px; fill: none; stroke: #fff; stroke-width: 1.3; }
.peek { width: 5px; height: 40px; border-left: 1px solid #7a8087; }
```
FILE: chart.js
```js
const NS = 'http://www.w3.org/2000/svg';
const barX = i => Math.floor(12 + 11.713 * i);

function add(svg, tag, attrs) {
  const el = document.createElementNS(NS, tag);
  for (const k in attrs) el.setAttribute(k, attrs[k]);
  svg.appendChild(el);
}
function rect(svg, x, y, width, height, fill) {
  add(svg, 'rect', { x, y, width, height, fill });
}
function line(svg, points, stroke, width, dash) {
  const a = { points, fill: 'none', stroke, 'stroke-width': width };
  if (dash) a['stroke-dasharray'] = dash;
  add(svg, 'polyline', a);
}

// Bars that open a month get a solid line, bars that open a week a dotted one.
const months = [1, 22, 44, 66, 82, 102, 125];
const weeks = [6, 11, 16, 21, 26, 31, 36, 41, 46, 51, 56, 61, 70, 75, 80, 85, 90, 95, 100, 105, 110, 115, 120, 130];
function grid(svg, top, bottom) {
  months.forEach(i => rect(svg, barX(i), top, 1, bottom - top, '#444'));
  weeks.forEach(i => line(svg, `${barX(i) + .5},${top} ${barX(i) + .5},${bottom}`, '#505050', 1, '1 1'));
}

const price = document.getElementById('price');
grid(price, 101, 705);

// Moving-average ribbons
const ribbons = [
  ['#3cb371', 2, [
    '12,217 82,219 199,222 269,226 375,230 520,238 700,247 784,251 1000,259 1183,262 1358,269 1558,276',
    '12,220 82,222 199,226 269,229 375,233 520,241 700,249 784,252 1000,260 1183,264 1358,271 1558,277',
    '12,224 82,226 199,229 269,232 375,236 520,244 700,252 784,254 1000,261 1183,265 1358,272 1558,278',
    '12,228 82,229 199,232 269,236 375,240 520,248 700,255 784,257 1000,263 1183,267 1358,274 1558,279']],
  ['#f0f', 2, [
    '12,265 100,266 199,268 269,270 375,275 520,280 784,284 1000,289 1206,293 1400,296 1558,299',
    '12,276 100,277 199,278 269,281 375,286 520,289 784,293 1000,297 1206,300 1400,303 1558,306',
    '12,286 100,287 199,289 269,291 375,295 520,298 784,302 1000,305 1206,307 1400,310 1558,313',
    '12,298 100,298 199,299 269,301 375,305 520,308 784,311 1000,314 1206,316 1400,319 1558,321']],
  ['#fff', 1, [
    '12,135 35,138 267,176 316,184 375,196 398,201 433,209 520,223 784,257 1000,287 1206,312 1358,330 1476,343 1558,351',
    '12,140 35,143 267,186 316,195 375,209 398,215 433,223 520,240 784,280 1000,309 1206,336 1358,356 1476,369 1558,377',
    '12,143 35,147 267,193 316,204 375,218 398,224 433,233 520,249 784,290 1000,322 1206,350 1358,370 1476,383 1558,391',
    '12,147 35,152 267,201 316,212 375,227 398,234 433,243 520,261 784,305 1000,337 1206,365 1358,385 1476,397 1558,405']],
  ['#00f', 1, [
    '12,200 37,206 60,211 82,218 105,226 140,235 199,249 222,259 257,269 316,283 375,307 433,325 492,342 532,350 574,358 619,366 667,376 705,381 744,391 785,398 831,404 890,412 948,415 1000,419 1066,425 1124,430 1183,434 1241,442 1300,445 1358,451 1417,454 1476,457 1558,459',
    '12,216 35,222 82,235 140,253 199,271 222,279 269,292 316,306 375,326 433,346 492,363 527,371 562,375 584,380 609,384 667,394 726,406 785,416 831,420 890,426 948,429 1028,435 1066,437 1124,442 1183,446 1241,451 1300,454 1358,461 1417,465 1476,467 1558,468',
    '12,232 47,239 82,254 140,273 199,290 222,298 269,312 316,325 375,345 433,364 492,382 527,390 562,393 609,401 667,410 726,420 785,430 831,435 890,440 948,442 1000,445 1055,449 1183,460 1241,464 1300,469 1358,473 1417,476 1476,477 1558,478',
    '12,240 47,248 82,262 140,281 199,300 222,307 269,320 316,333 375,354 433,373 492,391 527,397 562,401 609,410 667,417 726,429 785,438 831,443 890,448 948,449 1000,451 1066,457 1136,461 1241,468 1300,473 1358,477 1417,479 1476,480 1551,480 1558,479']],
  ['#ff0', 1, [
    '12,264 35,274 82,294 105,304 140,317 175,329 222,351 257,365 293,378 339,400 398,432 433,448 468,465 501,475 527,480 562,483 574,486 609,491 667,497 712,503 750,508 778,511 837,511 890,507 913,504 948,494 1007,488 1025,487 1066,483 1101,481 1147,477 1269,477 1310,473 1358,474 1421,477 1460,477 1558,472',
    '12,264 82,296 105,307 140,323 175,335 222,361 257,378 293,395 339,420 387,448 433,470 480,491 516,499 544,501 609,506 644,509 680,510 723,515 785,518 831,514 890,506 913,502 948,491 1007,482 1025,481 1066,478 1101,477 1136,472 1168,470 1219,471 1269,473 1358,474 1421,475 1476,476 1558,471',
    '12,265 82,298 93,307 117,319 175,343 222,372 257,395 293,412 339,438 387,469 433,494 480,515 501,519 527,521 550,519 623,520 667,519 730,518 785,518 831,513 867,509 902,501 937,490 960,484 1007,475 1055,471 1124,469 1160,465 1194,467 1241,473 1295,471 1358,473 1400,475 1476,474 1558,471',
    '12,266 35,276 70,300 93,318 117,333 163,360 199,385 222,401 257,420 293,439 339,467 375,487 398,503 433,518 468,534 498,539 527,539 550,533 587,530 626,524 667,518 730,516 785,518 831,509 867,503 902,495 937,484 960,475 1007,467 1042,464 1084,465 1124,464 1160,462 1185,464 1241,472 1295,471 1337,472 1358,474 1421,477 1476,473 1558,470']]
];
ribbons.forEach(([color, width, set]) => set.forEach(p => line(price, p, color, width)));

line(price, '12,269 35,288 47,296 60,306 70,315 82,326 93,339 105,349 140,372 175,393 199,413 222,430 233,438 257,449 293,466 316,479 339,492 375,513 398,528 433,540 468,554 483,556 501,555 527,550 550,540 574,535 609,528 644,521 667,516 691,514 780,513 796,509 831,502 867,496 890,491 909,485 937,475 960,467 984,465 1007,461 1034,459 1066,460 1124,460 1160,457 1183,460 1241,469 1300,472 1328,475 1358,478 1387,481 1425,482 1459,480 1476,478 1505,475 1559,470', '#0f0', 4);

[
  '12,342 35,382 47,394 60,408 70,425 82,444 93,464 105,474 117,478 140,480 175,475 187,480 199,493 222,510 246,514 281,512 293,515 316,529 339,537 351,548 370,569 386,589 398,595 433,593 468,595 480,590 492,578 515,548 527,533 540,510 550,493 574,479 609,475 644,478 680,485 703,497 726,512 750,525 770,524 785,515 797,502 831,491 867,480 890,470 914,452 937,433 960,420 984,424 1007,429 1020,434 1043,445 1055,453 1077,468 1101,471 1124,465 1143,452 1160,455 1183,475 1206,484 1230,491 1252,499 1269,493 1295,484 1337,483 1358,487 1387,489 1421,485 1459,475 1476,467 1501,455 1522,452 1558,452',
  '12,307 35,336 58,360 82,391 105,420 129,439 152,451 175,460 199,479 222,495 257,502 293,505 316,513 339,523 363,540 386,559 421,571 445,579 468,584 492,578 527,560 550,537 574,519 595,508 620,498 650,487 667,485 690,487 715,490 735,500 760,504 778,505 797,503 831,497 890,488 914,473 937,457 960,443 984,440 1007,438 1033,438 1077,452 1101,455 1136,452 1160,454 1183,467 1219,478 1248,487 1300,485 1337,479 1358,482 1400,487 1442,483 1476,478 1505,471 1534,463 1558,460',
  '12,285 35,312 58,328 82,353 105,380 140,405 175,425 199,444 222,463 257,479 293,491 328,506 351,518 375,535 398,547 433,556 468,568 483,570 510,565 527,558 550,543 574,534 609,523 640,511 667,505 697,500 726,502 760,504 778,510 797,509 831,500 890,489 914,483 937,471 960,461 984,457 1007,452 1034,450 1077,453 1118,455 1160,454 1183,461 1219,472 1252,477 1295,479 1337,481 1358,485 1387,485 1442,482 1476,479 1505,475 1558,466'
].forEach(p => { line(price, p, '#000', 1); line(price, p, '#f00', 1, '3 3'); });

// Candles: kind, high, body top, body bottom, low.
// Capital = solid body, lower case = hollow; G/g up, R/r down.
const candles = `g376,379,400,418 R387,388,435,442 R418,423,445,454 g406,412,428,428 R410,411,449,450 R463,463,495,510 g477,487,515,522 R494,494,531,539 g491,495,531,534 g477,477,496,507
G457,462,464,471 R473,473,476,496 G452,459,462,468 R459,459,466,475 r460,467,471,479 R466,466,514,521 R510,512,555,564 g524,540,561,582 R533,536,546,555 g504,504,543,548
R485,494,505,505 G500,503,505,531 G487,495,498,504 R497,497,510,515 r509,513,524,524 R526,527,541,567 R543,549,568,573 g560,560,585,588 g544,554,558,563 R567,567,601,613
G578,591,592,597 R604,608,610,628 R623,625,643,656 g603,605,686,688 g570,574,594,596 g572,574,577,609 R569,571,585,589 R556,592,595,599 R588,599,603,606 g598,600,606,616
g571,571,590,590 g530,530,562,562 g499,499,527,539 g479,479,493,511 R459,468,495,495 g441,441,499,500 g419,425,429,438 R431,431,480,480 R467,481,489,495 G445,471,478,482
G465,469,476,488 R460,466,500,500 g480,480,495,506 G463,463,478,482 g463,471,479,479 r461,474,480,481 R460,473,492,492 R492,494,510,525 R497,497,515,531 G498,505,512,516
R505,509,514,521 R512,514,556,556 g529,532,555,557 g516,518,528,538 R512,518,527,527 R516,516,530,530 g485,485,524,524 G475,479,483,487 g469,470,480,481 R460,471,477,481
G464,467,473,476 R469,471,474,482 G459,467,471,472 G465,467,471,477 G459,464,466,471 g457,457,464,468 g431,431,453,454 g418,420,427,430 g404,408,424,424 g389,397,402,404
R396,396,415,415 g404,404,418,432 R398,400,447,447 G438,442,445,452 R440,443,446,453 g430,430,451,457 R428,432,459,459 g443,451,457,457 R448,453,461,461 R458,458,472,472
R473,476,486,499 R482,483,492,498 g476,479,494,496 g467,467,477,480 G463,466,468,473 g433,433,467,467 R423,430,440,440 R449,449,473,473 R473,473,474,500 R475,475,491,496
R500,502,513,516 G497,504,509,515 g489,489,510,521 R486,490,493,497 R488,491,508,510 G487,498,506,506 g486,492,497,497 g478,478,504,504 g466,470,478,478 r472,474,478,482
r472,474,482,482 R476,478,490,496 g463,463,476,478 R468,470,481,485 R471,473,484,484 R486,487,510,510 g495,498,504,517 g487,489,495,497 g483,483,496,500 g475,480,482,484
g475,475,481,487 G467,471,473,475 G470,470,472,479 G459,464,467,467 g457,460,465,465 g442,442,449,451 R440,440,444,447 g440,440,444,448 R437,437,453,453 R451,452,455,461
R448,449,460,460 g454,454,462,469 R451,451,455,458`.split(/\s+/);
candles.forEach((c, i) => {
  const [high, top, bottom, low] = c.slice(1).split(',').map(Number);
  const x = barX(i), color = /g/i.test(c[0]) ? '#0f0' : '#f00';
  rect(price, x, high, 1, low - high, color);
  rect(price, x - 4, top, 9, bottom - top, color);
  if (c[0] > 'Z' && bottom - top > 2) rect(price, x - 3, top + 1, 7, bottom - top - 2, '#000');
});

// Drawn studies: trend lines, supports and the two cups
[
  '152,452 573,572', '339,543 573,572', '492,569.500 858,569.500', '858,570.500 1216,570.500', '492,599.500 1216,599.500',
  '773,527.500 1382,527.500', '937,386 1003,398 1206,437 1323,458 1406,474', '1276,464 1640,416',
  '339,547 339,557 347,597 351,612 363,636 375,647 392,652 407,647 421,633 433,613 440,590 444,548',
  '446,550 448,574 457,595 467,604 480,607 500,599 508,586 515,565'
].forEach(p => line(price, p, '#0f0', 1, '3 3'));

const spi = document.getElementById('spi');
grid(spi, 707, 995);
// Indicator bars: direction (D = flat), top, bottom
const bars = `R907,921 R920,934 R933,948 R947,954 R953,958 R957,965 R964,970 R969,979 R978,985 G979,985 G964,980 G946,965 G926,947 G910,927 G898,911 G895,899 R895,902 R901,913 R912,923 D922,924
G912,924 G897,913 G881,898 G869,882 G863,870 D863,864 R863,871 R870,880 R879,886 R885,894 R893,900 R899,905 R904,914 R913,919 G912,919 G900,913 G885,901 G872,886 G866,873 D865,867
G861,866 G849,862 G827,850 G799,828 G775,800 G753,776 G734,754 G725,735 R725,728 R727,736 R735,747 R746,761 R760,769 R768,774 R773,777 D776,778 R777,781 R780,789 R788,800 R799,811
R810,820 R819,830 R829,839 R838,843 D842,844 D842,844 G833,843 G822,834 G810,823 G798,811 G789,799 G786,790 D785,787 D785,786 D785,786 D784,786 G780,785 G772,781 G762,773 G752,763
G746,753 D745,747 R745,752 R751,765 R764,778 R777,788 R787,797 R796,804 R803,810 R809,817 R816,827 R826,836 R835,843 D842,844 G841,844 G832,842 G820,833 G815,821 D815,816 R815,822
R821,834 R833,846 R845,852 R851,854 D852,854 D851,853 G848,852 G844,849 G836,845 G827,837 G820,828 G817,821 G815,818 D815,816 D815,816 R815,821 R820,826 R825,830 D829,831 G827,831
G822,828 G816,823 G812,817 G808,813 G804,809 G799,805 G793,800 G788,794 G785,789 D785,787 R786,792 R791,796 R795,800`.split(/\s+/);
bars.forEach((b, i) => {
  const [top, bottom] = b.slice(1).split(',').map(Number), x = barX(i);
  rect(spi, x - 4, top, 9, bottom - top, '#c0c0c0');
  if (b[0] !== 'D') rect(spi, x - 3, top + 1, 7, bottom - top - 2, b[0] === 'G' ? '#0f0' : '#f00');
});
```
